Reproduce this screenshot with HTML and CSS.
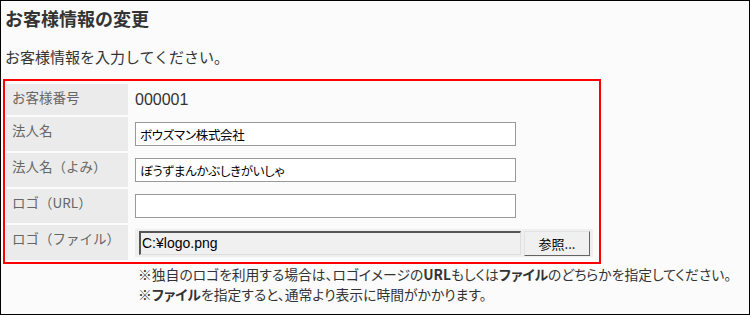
FILE: index.html
```html
<!DOCTYPE html>
<html lang="ja">
<head>
  <meta charset="UTF-8" />
  <title>お客様情報の変更</title>
  <link rel="stylesheet" href="styles.css">
</head>
<body>

  <div class="page">
    <h1 class="title">お客様情報の変更</h1>
    <p class="lead">お客様情報を入力してください。</p>

    <div class="form">
      <div class="label">お客様番号</div>
      <div class="value number">000001</div>

      <div class="label">法人名</div>
      <div class="value"><input type="text" class="text-input" value="ボウズマン株式会社"></div>

      <div class="label">法人名（よみ）</div>
      <div class="value"><input type="text" class="text-input" value="ぼうずまんかぶしきがいしゃ"></div>

      <div class="label">ロゴ（URL）</div>
      <div class="value"><input type="text" class="text-input" value=""></div>

      <div class="label">ロゴ（ファイル）</div>
      <div class="value">
        <div class="file">
          <div class="file-path">C:¥logo.png</div>
          <button class="browse-btn">参照...</button>
        </div>
      </div>
    </div>

    <div class="notes">
      <div>※独自のロゴを利用する場合は、ロゴイメージの<b>URL</b>もしくは<b>ファイル</b>のどちらかを指定してください。</div>
      <div>※<b>ファイル</b>を指定すると、通常より表示に時間がかかります。</div>
    </div>
  </div>

</body>
</html>
```

FILE: styles.css
```css
* {
  box-sizing: border-box;
}

body {
  margin: 0;
  font-family: "Noto Sans CJK JP", "Noto Sans", sans-serif;
  color: #333;
}

.page {
  width: 750px;
  height: 315px;
  border: 1px solid #000;
  background: #fbfbfb;
  padding: 0 2px;
}

.title {
  margin: 0;
  padding: 5px 2px 0;
  font-size: 18px;
  line-height: 24px;
  font-weight: bold;
  color: #333;
}

.lead {
  margin: 17px 2px 0;
  font-size: 15px;
  line-height: 20px;
}

.form {
  margin-top: 12px;
  width: 598px;
  border: 2px solid #f00;
  padding: 3px 0 2px 1px;
  display: grid;
  grid-template-columns: 122px 1fr;
  grid-template-rows: 31px 34px 34px 34px 35px;
  row-gap: 2px;
  column-gap: 2px;
}

.label {
  background: #ebebeb;
  color: #666;
  font-size: 13.5px;
  line-height: 18px;
  padding: 4px 6px 0;
}

.value {
  display: flex;
  align-items: center;
  padding-left: 5px;
}

.number {
  font-family: "Liberation Sans", sans-serif;
  font-size: 16px;
  color: #333;
}

.text-input {
  width: 381px;
  height: 24px;
  border: 1px solid #999;
  background: #fff;
  padding: 0 4px;
  font-family: inherit;
  font-feature-settings: "palt";
  font-size: 12.5px;
  letter-spacing: -0.3px;
  color: #000;
  outline: none;
}

.file {
  display: flex;
  gap: 3px;
  width: 458px;
  background: #efefef;
  padding: 2px 3px 1px 4px;
}

.file-path {
  width: 382px;
  height: 24px;
  background: #f0f0f0;
  border-style: solid;
  border-width: 2px 1px 1px 2px;
  border-color: #555 #ddd #ddd #555;
  padding-left: 1px;
  font-family: "Liberation Sans", sans-serif;
  font-size: 14px;
  line-height: 21px;
  color: #000;
}

.browse-btn {
  width: 66px;
  height: 25px;
  background: #f0f0f0;
  border-style: solid;
  border-width: 1px;
  border-color: #e3e3e3 #646464 #646464 #e3e3e3;
  font-family: inherit;
  font-size: 13px;
  color: #000;
  padding: 0;
  cursor: pointer;
}

.notes {
  margin: 0 0 0 135px;
  font-size: 13.8px;
  font-feature-settings: "palt";
  line-height: 20px;
  color: #333;
}

.notes b {
  font-weight: bold;
}
```
